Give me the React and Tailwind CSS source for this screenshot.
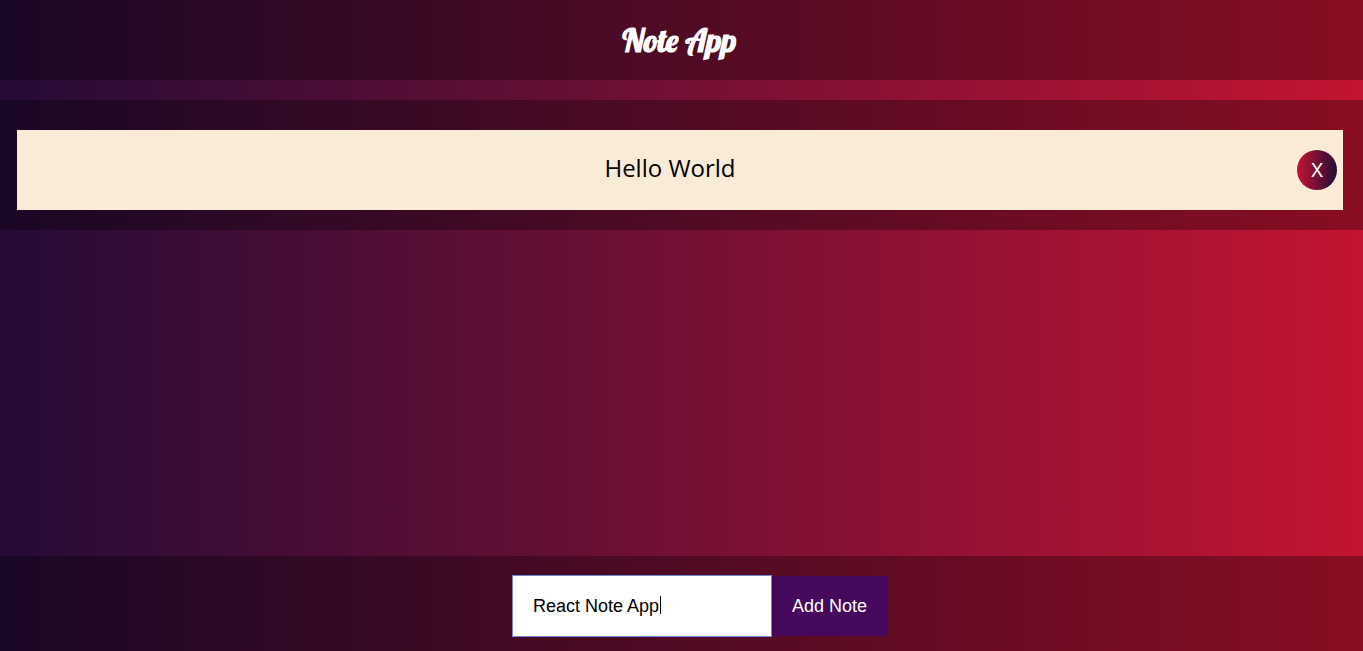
import { useState } from "react";

function Header() {
  return (
    <header className="flex h-20 shrink-0 items-center justify-center bg-black/30 pr-1">
      <h1 className="font-['Lobster','Liberation_Serif',serif] text-[32px] leading-10 font-bold text-white">
        Note App
      </h1>
    </header>
  );
}

function Note({ text, onDelete }) {
  return (
    <li className="grid h-20 grid-cols-[26px_1fr_46px] items-center bg-[#faebd7]">
      <p className="col-start-2 pb-1 text-center font-['Open_Sans',sans-serif] text-2xl leading-9 text-black">
        {text}
      </p>
      <button
        type="button"
        aria-label="Delete note"
        onClick={onDelete}
        className="size-10 rounded-full bg-linear-to-r/srgb from-[#c31432] to-[#240b36] font-['Noto_Sans',sans-serif] text-xl leading-10 text-white"
      >
        X
      </button>
    </li>
  );
}

export default function App() {
  const [notes, setNotes] = useState(["Hello World"]);
  const [draft, setDraft] = useState("React Note App");

  const addNote = (event) => {
    event.preventDefault();
    if (!draft.trim()) return;
    setNotes([...notes, draft]);
    setDraft("");
  };

  return (
    <div className="flex min-h-screen flex-col bg-linear-to-r/srgb from-[#240b36] to-[#c31432]">
      <Header />
      <main className="mt-5">
        <ul className="flex flex-col gap-5 bg-black/30 pt-[30px] pr-5 pb-5 pl-[17px]">
          {notes.map((note, index) => (
            <Note
              key={index}
              text={note}
              onDelete={() => setNotes(notes.filter((_, i) => i !== index))}
            />
          ))}
        </ul>
      </main>
      <form
        onSubmit={addNote}
        className="mt-auto flex items-center justify-center bg-black/30 pt-[19px] pb-[14px] pl-9 font-['Liberation_Sans',sans-serif] text-lg"
      >
        <div className="relative">
          <input
            type="text"
            aria-label="New note"
            value={draft}
            onChange={(event) => setDraft(event.target.value)}
            className="peer block h-[62px] w-[260px] border border-[#6d86d6] bg-white px-5 text-black outline-none"
          />
          <span
            aria-hidden="true"
            className="absolute top-[21px] left-[148px] h-[18px] w-px bg-black peer-focus:hidden"
          />
        </div>
        <button type="submit" className="h-[60px] bg-[#46085c] px-5 text-white">
          Add Note
        </button>
      </form>
    </div>
  );
}
